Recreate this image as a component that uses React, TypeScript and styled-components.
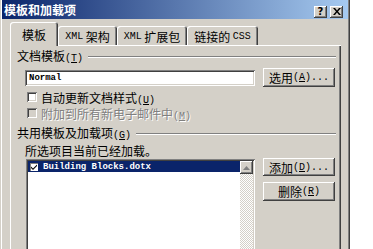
import styled, { createGlobalStyle } from "styled-components";

const GlobalStyle = createGlobalStyle`
  html, body {
    margin: 0;
    padding: 0;
    background: #fff;
    overflow: hidden;
  }
  body {
    font-family: "Noto Sans CJK SC", "DejaVu Sans", sans-serif;
    font-size: 12px;
    color: #000;
  }
`;

const raised = `
  box-shadow: inset -1px -1px #404040, inset 1px 1px #fff,
    inset -2px -2px #808080, inset 2px 2px #d4d0c8;
`;
const sunken = `
  box-shadow: inset 1px 1px #808080, inset -1px -1px #fff,
    inset 2px 2px #404040, inset -2px -2px #d4d0c8;
`;

const Window = styled.div`
  width: 350px;
  height: 249px;
  overflow: hidden;
  box-sizing: border-box;
  padding: 0 2px 0 2px;
  background: #d4d0c8;
  box-shadow: inset -1px 0 #404040, inset 1px 0 #d4d0c8,
    inset -2px 0 #808080, inset 2px 0 #fff;
  display: flex;
  flex-direction: column;
`;

const TitleBar = styled.div`
  height: 19px;
  flex: none;
  display: flex;
  align-items: center;
  padding: 0 5px 0 2px;
  background: linear-gradient(to right, #0a246a, #a6caf0);
  color: #fff;
  font-weight: bold;
  line-height: 19px;
`;

const TitleButtons = styled.div`
  margin-left: auto;
  margin-top: 4px;
  display: flex;
  gap: 3px;
`;

const TitleButton = styled.div`
  width: 13px;
  height: 12px;
  background: #d4d0c8;
  ${raised}
  display: flex;
  align-items: center;
  justify-content: center;
  color: #000;
  font-family: "DejaVu Sans", sans-serif;
  font-size: 10px;
  font-weight: bold;
  line-height: 12px;
`;

const Body = styled.div`
  flex: 1;
  display: flex;
  flex-direction: column;
  padding: 3px 7px 0 8px;
`;

const TabRow = styled.div`
  display: flex;
  align-items: flex-end;
  height: 23px;
  flex: none;
`;

const Tab = styled.div<{ $w: number; $active?: boolean }>`
  width: ${(p) => p.$w}px;
  height: ${(p) => (p.$active ? 24 : 19)}px;
  margin-bottom: ${(p) => (p.$active ? -1 : 0)}px;
  box-sizing: border-box;
  background: #d4d0c8;
  border-radius: 3px 3px 0 0;
  box-shadow: inset 1px 1px #fff, inset -1px 0 #404040, inset -2px 0 #808080;
  display: flex;
  align-items: center;
  justify-content: center;
  padding-top: ${(p) => (p.$active ? 0 : 1)}px;
  white-space: nowrap;
  z-index: ${(p) => (p.$active ? 1 : 0)};
  position: relative;
`;

const Lat = styled.span`
  font-family: "Liberation Mono", monospace;
  font-size: 10px;
`;

const Panel = styled.div`
  flex: 1;
  background: #d4d0c8;
  box-shadow: inset 1px 1px #fff, inset -1px 0 #404040, inset -2px 0 #808080;
  padding: 5px 5px 0 7px;
  display: flex;
  flex-direction: column;
  min-height: 0;
`;

const GroupHeader = styled.div<{ $gap?: number }>`
  display: flex;
  align-items: center;
  gap: 5px;
  height: 14px;
  line-height: 14px;
  margin-top: ${(p) => p.$gap ?? 0}px;
  white-space: nowrap;
`;

const Etched = styled.div`
  flex: 1;
  height: 0;
  border-top: 1px solid #808080;
  border-bottom: 1px solid #fff;
`;

const GroupBody = styled.div<{ $fill?: boolean }>`
  padding-left: 8px;
  display: flex;
  flex-direction: column;
  flex: ${(p) => (p.$fill ? 1 : "none")};
`;

const FieldRow = styled.div`
  margin-top: 4px;
  display: flex;
  align-items: center;
  gap: 8px;
`;

const TextInput = styled.div`
  width: 230px;
  height: 16px;
  box-sizing: border-box;
  background: #fff;
  ${sunken}
  padding: 0 4px;
  font-family: "Liberation Mono", monospace;
  font-weight: bold;
  font-size: 9px;
  line-height: 16px;
`;

const Button = styled.div<{ $h?: number }>`
  width: 72px;
  height: ${(p) => p.$h ?? 19}px;
  box-sizing: border-box;
  background: #d4d0c8;
  ${raised}
  display: flex;
  align-items: center;
  justify-content: center;
  white-space: nowrap;
`;

const CheckRow = styled.div<{ $gap: number; $disabled?: boolean }>`
  margin-top: ${(p) => p.$gap}px;
  margin-left: 2px;
  height: 14px;
  display: flex;
  align-items: center;
  gap: 4px;
  color: ${(p) => (p.$disabled ? "#808080" : "#000")};
  text-shadow: ${(p) => (p.$disabled ? "1px 1px #fff" : "none")};
  white-space: nowrap;
`;

const CheckBox = styled.div<{ $disabled?: boolean }>`
  width: 10px;
  height: 10px;
  box-sizing: border-box;
  background: ${(p) => (p.$disabled ? "#d4d0c8" : "#fff")};
  ${sunken}
`;

const Note = styled.div`
  margin-top: 3px;
  height: 14px;
  line-height: 14px;
  white-space: nowrap;
`;

const ListArea = styled.div`
  display: flex;
  gap: 8px;
  flex: 1;
`;

const ListBox = styled.div`
  margin-top: 1px;
  margin-left: 1px;
  width: 229px;
  height: 130px;
  box-sizing: border-box;
  background: #fff;
  ${sunken}
  padding: 2px;
  display: flex;
`;

const ListItems = styled.div`
  flex: 1;
`;

const ListItem = styled.div<{ $selected?: boolean }>`
  height: 11px;
  display: flex;
  align-items: center;
  gap: 5px;
  padding-left: 2px;
  background: ${(p) => (p.$selected ? "#0a246a" : "transparent")};
  color: ${(p) => (p.$selected ? "#fff" : "#000")};
  font-family: "Liberation Mono", monospace;
  font-weight: bold;
  font-size: 9px;
  white-space: nowrap;
`;

const ItemCheck = styled.div`
  width: 8px;
  height: 8px;
  background: #fff;
  box-shadow: inset 1px 1px #808080;
  display: flex;
`;

const ScrollBar = styled.div`
  width: 13px;
  background-color: #f0eeea;
  background-image: repeating-conic-gradient(#d4d0c8 0 25%, #fff 0 50%);
  background-size: 2px 2px;
`;

const ScrollArrow = styled.div`
  width: 13px;
  height: 13px;
  background: #d4d0c8;
  ${raised}
  display: flex;
  align-items: center;
  justify-content: center;
`;

const ButtonColumn = styled.div`
  display: flex;
  flex-direction: column;
  gap: 6px;
`;

export default function App() {
  return (
    <>
      <GlobalStyle />
      <Window>
        <TitleBar>
          模板和加载项
          <TitleButtons>
            <TitleButton>?</TitleButton>
            <TitleButton>
              <svg width="8" height="7" viewBox="0 0 8 7">
                <path d="M0 0h2l2 2.5L6 0h2L5 3.5 8 7H6L4 4.5 2 7H0l3-3.5z" fill="#000" />
              </svg>
            </TitleButton>
          </TitleButtons>
        </TitleBar>
        <Body>
          <TabRow>
            <Tab $w={48} $active>模板</Tab>
            <Tab $w={59}>
              <Lat>XML</Lat>&nbsp;架构
            </Tab>
            <Tab $w={70}>
              <Lat>XML</Lat>&nbsp;扩展包
            </Tab>
            <Tab $w={71}>
              链接的&nbsp;<Lat>CSS</Lat>
            </Tab>
          </TabRow>
          <Panel>
            <GroupHeader>
              <span>
                文档模板<Lat>(<u>T</u>)</Lat>
              </span>
              <Etched />
            </GroupHeader>
            <GroupBody>
              <FieldRow>
                <TextInput>Normal</TextInput>
                <Button>
                  选用<Lat>(<u>A</u>)...</Lat>
                </Button>
              </FieldRow>
              <CheckRow $gap={3}>
                <CheckBox />
                <span>
                  自动更新文档样式<Lat>(<u>U</u>)</Lat>
                </span>
              </CheckRow>
              <CheckRow $gap={2} $disabled>
                <CheckBox $disabled />
                <span>
                  附加到所有新电子邮件中<Lat>(<u>M</u>)</Lat>
                </span>
              </CheckRow>
            </GroupBody>
            <GroupHeader $gap={7}>
              <span>
                共用模板及加载项<Lat>(<u>G</u>)</Lat>
              </span>
              <Etched />
            </GroupHeader>
            <GroupBody $fill>
              <Note>所选项目当前已经加载。</Note>
              <ListArea>
                <ListBox>
                  <ListItems>
                    <ListItem $selected>
                      <ItemCheck>
                        <svg width="8" height="8" viewBox="0 0 8 8">
                          <path d="M1 3.5l2 2 4-4v1.5l-4 4-2-2z" fill="#000" />
                        </svg>
                      </ItemCheck>
                      Building Blocks.dotx
                    </ListItem>
                  </ListItems>
                  <ScrollBar>
                    <ScrollArrow>
                      <svg width="7" height="4" viewBox="0 0 7 4">
                        <path d="M3.5 0L7 4H0z" fill="#808080" />
                      </svg>
                    </ScrollArrow>
                  </ScrollBar>
                </ListBox>
                <ButtonColumn>
                  <Button $h={18}>
                    添加<Lat>(<u>D</u>)...</Lat>
                  </Button>
                  <Button>
                    删除<Lat>(<u>R</u>)</Lat>
                  </Button>
                </ButtonColumn>
              </ListArea>
            </GroupBody>
          </Panel>
        </Body>
      </Window>
    </>
  );
}
